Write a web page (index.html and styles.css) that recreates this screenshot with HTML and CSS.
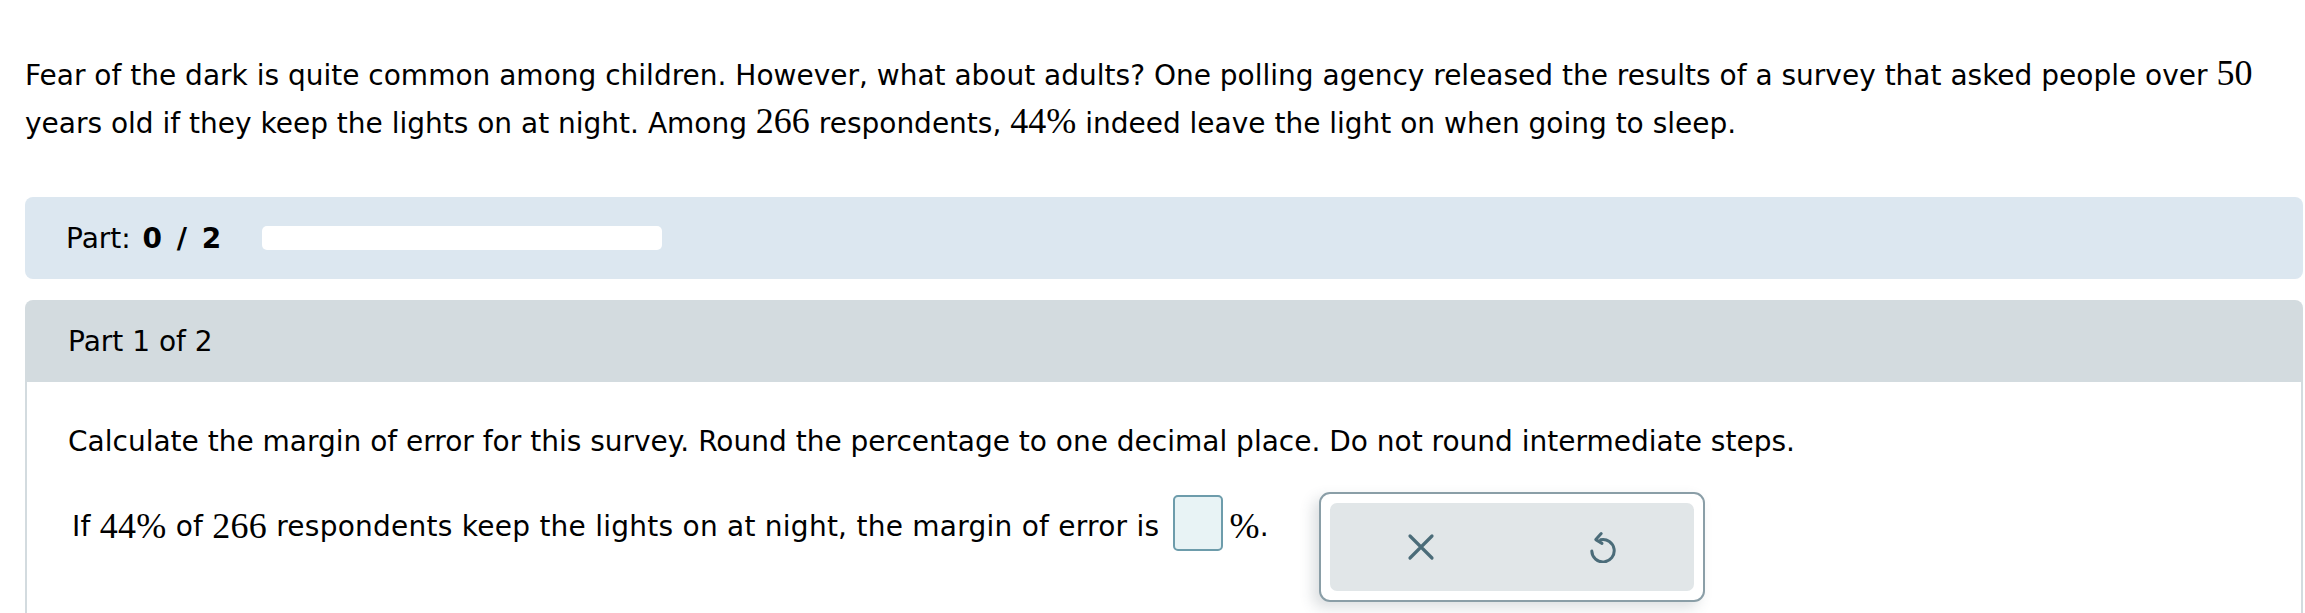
FILE: index.html
```html
<!DOCTYPE html>
<html lang="en">
<head>
<meta charset="utf-8">
<title>Margin of error</title>
<link rel="stylesheet" href="styles.css">
</head>
<body>
<div class="page">
  <p class="intro">Fear of the dark is quite common among children. However, what about adults? One polling agency released the results of a survey that asked people over <span class="m">50</span> years old if they keep the lights on at night. Among <span class="m">266</span> respondents, <span class="m">44%</span> indeed leave the light on when going to sleep.</p>

  <div class="progress">
    <span class="progress-label">Part: <b>0 / 2</b></span>
    <div class="bar"></div>
  </div>

  <section class="part">
    <div class="part-head">Part 1 of 2</div>
    <div class="part-body">
      <p class="task">Calculate the margin of error for this survey. Round the percentage to one decimal place. Do not round intermediate steps.</p>
      <div class="q">
        <div class="q-text">If <span class="m">44%</span> of <span class="m">266</span> respondents keep the lights on at night, the margin of error is<span class="answer"></span><span class="m">%</span>.</div>
        <div class="tools">
          <div class="tools-inner">
            <button class="tool" aria-label="Clear">
              <svg viewBox="0 0 30 30" width="30" height="30"><path d="M4 4 L26 26 M26 4 L4 26" fill="none" stroke="#4b6c79" stroke-width="3.2" stroke-linecap="round"/></svg>
            </button>
            <button class="tool" aria-label="Reset">
              <svg viewBox="0 0 32 32" width="32" height="32"><path d="M13.6 8.8 A11.2 11.2 0 1 1 4.8 20" fill="none" stroke="#4b6c79" stroke-width="3" stroke-linecap="round"/><path d="M14.2 2.6 L8.8 8.6 L15 12.4" fill="none" stroke="#4b6c79" stroke-width="3" stroke-linecap="round" stroke-linejoin="round"/></svg>
            </button>
          </div>
        </div>
      </div>
    </div>
  </section>
</div>
</body>
</html>
```

FILE: styles.css
```css
html, body {
  margin: 0;
  padding: 0;
  background: #ffffff;
}
body {
  font-family: "DejaVu Sans", Verdana, sans-serif;
  font-size: 28px;
  color: #000;
}
.page {
  padding: 52px 2px 0 25px;
}
.m {
  font-family: "Liberation Serif", "Times New Roman", serif;
  font-size: 36px;
  line-height: 0;
}
.intro {
  margin: 0;
  line-height: 48px;
}
.progress {
  margin-top: 49px;
  height: 82px;
  background: #dce7f0;
  border-radius: 8px;
  display: flex;
  align-items: center;
  padding-left: 41px;
}
.progress-label b {
  font-weight: bold;
  word-spacing: 5px;
  margin-left: 3px;
}
.bar {
  width: 400px;
  height: 24px;
  background: #fff;
  border-radius: 5px;
  margin-left: 41px;
}
.part {
  margin-top: 21px;
}
.part-head {
  height: 82px;
  background: #d3dbdf;
  border-radius: 8px 8px 0 0;
  display: flex;
  align-items: center;
  padding-left: 43px;
}
.part-body {
  border-left: 2px solid #d3dbdf;
  border-right: 2px solid #d3dbdf;
  padding: 36px 0 20px 41px;
}
.task {
  margin: 0;
  line-height: 48px;
}
.q {
  margin-top: 26px;
  display: flex;
  align-items: flex-start;
}
.q-text {
  box-sizing: border-box;
  height: 62px;
  padding-top: 6px;
  display: flex;
  align-items: center;
  white-space: pre;
  padding-left: 4px;
  letter-spacing: 0.25px;
}
.answer {
  display: inline-block;
  width: 46px;
  height: 52px;
  border: 2px solid #6d9cab;
  background: #e8f3f5;
  border-radius: 5px;
  margin: -6px 6px 0 14px;
}
.tools {
  margin-left: 50px;
  border: 2px solid #8a9ea7;
  border-radius: 11px;
  background: #fff;
  padding: 9px;
  box-shadow: -6px 6px 14px rgba(60, 80, 90, 0.18);
}
.tools-inner {
  display: flex;
  background: #e1e6e8;
  border-radius: 7px;
}
.tool {
  width: 182px;
  height: 88px;
  border: 0;
  background: transparent;
  display: flex;
  align-items: center;
  justify-content: center;
  padding: 0;
}
```
